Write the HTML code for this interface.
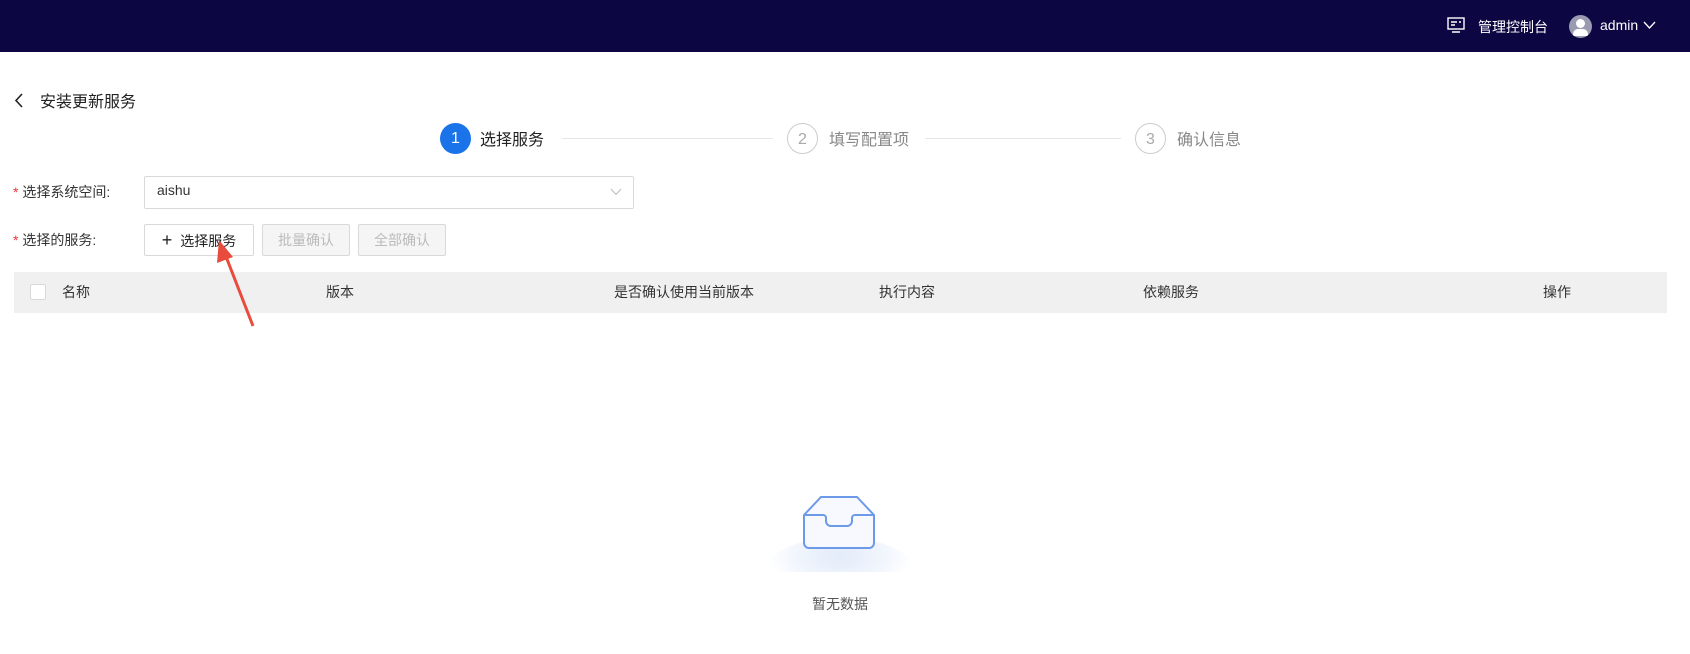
<!DOCTYPE html>
<html><head><meta charset="utf-8"><style>
*{margin:0;padding:0;box-sizing:border-box}
body{width:1690px;height:654px;background:#fff;font-family:"Liberation Sans","Noto Sans CJK SC",sans-serif;color:#333;position:relative;overflow:hidden;font-size:14px}
.a{position:absolute;white-space:nowrap}
.top{left:0;top:0;width:1690px;height:52px;background:#0c0742}
.circ{border-radius:50%;width:31px;height:31px;text-align:center;line-height:31px;font-size:16px}
.line{height:1px;background:#e6e6e6}
.btn{border:1px solid #d9d9d9;border-radius:2px;height:32px;line-height:30px;text-align:center;font-size:14px}
.dis{background:#f5f5f5;color:#bbb}
.req{color:#e33}
</style></head><body>
<div class="a top"></div>
<svg class="a" style="left:1447px;top:16px" width="18" height="18" viewBox="0 0 18 18" fill="none" stroke="#fff" stroke-width="1.4"><rect x="1" y="2" width="16" height="11"/><path d="M4 6h6M4 9h4M12 6h2M5 16h8"/></svg>
<div class="a" style="left:1478px;top:17px;color:#fff;font-size:14px">管理控制台</div>
<div class="a" style="left:1569px;top:15px;width:23px;height:23px;border-radius:50%;background:#9a9ab0;overflow:hidden">
<div class="a" style="left:7px;top:4px;width:9px;height:9px;border-radius:50%;background:#fff"></div>
<div class="a" style="left:4px;top:14px;width:15px;height:7px;border-radius:5px 5px 0 0;background:#fff"></div></div>
<div class="a" style="left:1600px;top:17px;color:#fff;font-size:14px">admin</div>
<svg class="a" style="left:1643px;top:21px" width="13" height="9" viewBox="0 0 13 9" fill="none" stroke="#fff" stroke-width="1.3"><path d="M1 1l5.5 6L12 1"/></svg>

<svg class="a" style="left:14px;top:93px" width="10" height="15" viewBox="0 0 10 15" fill="none" stroke="#222" stroke-width="1.6"><path d="M8 1L2 7.5 8 14"/></svg>
<div class="a" style="left:40px;top:88px;font-size:16px;color:#222">安装更新服务</div>

<div class="a circ" style="left:440px;top:123px;background:#1a73e8;color:#fff">1</div>
<div class="a" style="left:480px;top:126px;font-size:16px;color:#222">选择服务</div>
<div class="a line" style="left:562px;top:138px;width:211px"></div>
<div class="a circ" style="left:787px;top:123px;border:1px solid #ccc;color:#aaa">2</div>
<div class="a" style="left:829px;top:126px;font-size:16px;color:#888">填写配置项</div>
<div class="a line" style="left:925px;top:138px;width:196px"></div>
<div class="a circ" style="left:1135px;top:123px;border:1px solid #ccc;color:#aaa">3</div>
<div class="a" style="left:1177px;top:126px;font-size:16px;color:#888">确认信息</div>

<div class="a" style="left:13px;top:182px"><span class="req">*</span> 选择系统空间:</div>
<div class="a" style="left:144px;top:176px;width:490px;height:33px;border:1px solid #d9d9d9;border-radius:2px"></div>
<div class="a" style="left:157px;top:182px">aishu</div>
<svg class="a" style="left:610px;top:188px" width="12" height="8" viewBox="0 0 12 8" fill="none" stroke="#bbb" stroke-width="1"><path d="M1 1l5 5.5L11 1"/></svg>

<div class="a" style="left:13px;top:230px"><span class="req">*</span> 选择的服务:</div>
<div class="a btn" style="left:144px;top:224px;width:110px;color:#222"><b style="font-size:18px;font-weight:400;margin-right:8px">+</b>选择服务</div>
<div class="a btn dis" style="left:262px;top:224px;width:88px">批量确认</div>
<div class="a btn dis" style="left:358px;top:224px;width:88px">全部确认</div>

<div class="a" style="left:14px;top:272px;width:1653px;height:41px;background:#f0f0f0"></div>
<div class="a" style="left:30px;top:284px;width:16px;height:16px;border:1px solid #d9d9d9;background:#fff;border-radius:2px"></div>
<div class="a" style="left:62px;top:282px">名称</div>
<div class="a" style="left:326px;top:282px">版本</div>
<div class="a" style="left:614px;top:282px">是否确认使用当前版本</div>
<div class="a" style="left:879px;top:282px">执行内容</div>
<div class="a" style="left:1143px;top:282px">依赖服务</div>
<div class="a" style="left:1543px;top:282px">操作</div>

<svg class="a" style="left:200px;top:230px" width="70" height="110" viewBox="0 0 70 110"><path d="M53 96L25 24" stroke="#e84c3d" stroke-width="3"/><path d="M19 10L17 33 33 27Z" fill="#e84c3d"/></svg>

<div class="a" style="left:767px;top:538px;width:146px;height:60px;border-radius:50%;background:radial-gradient(ellipse at 50% 30%,#e3ebf9 0%,#f2f6fd 45%,rgba(255,255,255,0) 70%)"></div>
<div class="a" style="left:760px;top:572px;width:160px;height:30px;background:#fff"></div>
<svg class="a" style="left:801px;top:494px" width="76" height="60" viewBox="0 0 76 60" fill="none" stroke="#6d9ae8" stroke-width="2"><path d="M3 21L20 3h36l17 18v28a5 5 0 0 1-5 5H8a5 5 0 0 1-5-5Z" fill="#f7f9fe"/><path d="M3 21h19a3 3 0 0 1 3 3v3a5 5 0 0 0 5 5h16a5 5 0 0 0 5-5v-3a3 3 0 0 1 3-3h19"/></svg>
<div class="a" style="left:812px;top:594px;font-size:14px;color:#555">暂无数据</div>
</body></html>
